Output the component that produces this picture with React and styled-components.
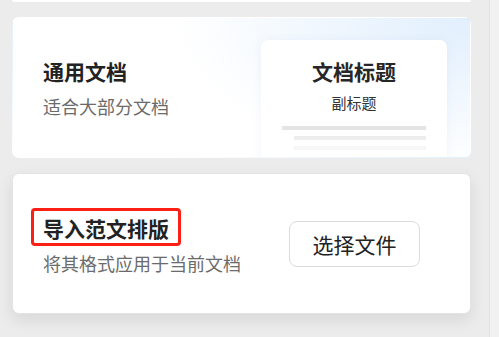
import styled, { createGlobalStyle } from 'styled-components'

const Global = createGlobalStyle`
  html, body {
    margin: 0;
    padding: 0;
    background: #ececec;
    font-family: "Noto Sans CJK SC", "Noto Sans", sans-serif;
    overflow: hidden;
  }
`

const Page = styled.div`
  display: flex;
  width: 499px;
  height: 337px;
`

const List = styled.div`
  flex: 1;
  display: flex;
  flex-direction: column;
  gap: 15px;
  padding: 0 18px 0 12px;
  border-right: 1px solid #e2e2e2;
`

const Track = styled.div`
  width: 9px;
  background: #f1f1f1;
`

const CardStub = styled.div`
  height: 2px;
  background: #fff;
  border-radius: 0 0 6px 6px;
`

const Card = styled.div`
  position: relative;
  height: 141px;
  border-radius: 7px;
  overflow: hidden;
  display: flex;
  align-items: ${p => (p.$top ? 'flex-start' : 'center')};
  justify-content: space-between;
  padding: ${p => p.$pad};
  box-sizing: border-box;
  background: ${p =>
    p.$tint
      ? 'radial-gradient(ellipse 380px 190px at 100% 0%, #e1effd 0%, rgba(255,255,255,0) 78%), #fff'
      : '#fff'};
  box-shadow: ${p => (p.$raised ? '0 6px 16px rgba(0,0,0,0.09)' : 'none')};
  border: 1px solid ${p => (p.$raised ? '#e4e4e4' : 'transparent')};
`

const TextCol = styled.div`
  display: flex;
  flex-direction: column;
  align-self: center;
  padding-bottom: ${p => p.$lift || '0'};
`

const Title = styled.div`
  font-size: 21px;
  font-weight: 700;
  color: #222;
  line-height: 28px;
`

const Marked = styled.span`
  align-self: flex-start;
  margin-left: -12px;
  padding: 3px 9px 1px;
  border: 3px solid #fc1f14;
  border-radius: 4px;
`

const Sub = styled.div`
  font-size: 18px;
  color: #6b6b6b;
  line-height: 24px;
  margin-top: ${p => p.$gap};
`

const Preview = styled.div`
  position: relative;
  width: 186px;
  height: 130px;
  margin-top: 22px;
  background: #fff;
  border-radius: 7px;
  box-shadow: 0 0 10px rgba(160,190,220,0.15);
  display: flex;
  flex-direction: column;
  align-items: center;
  padding-top: 17px;
  box-sizing: border-box;

  &::after {
    content: '';
    position: absolute;
    left: 0;
    right: 0;
    bottom: 0;
    height: 36px;
    background: linear-gradient(rgba(255,255,255,0), #fff);
  }
`

const PreviewTitle = styled.div`
  font-size: 21px;
  font-weight: 700;
  color: #262626;
  line-height: 28px;
`

const PreviewSub = styled.div`
  font-size: 15px;
  color: #333;
  line-height: 20px;
  margin-top: 8px;
`

const Lines = styled.div`
  display: flex;
  flex-direction: column;
  align-items: flex-end;
  gap: 6px;
  width: 144px;
  margin-top: 13px;
`

const Line = styled.div`
  height: 4px;
  width: ${p => p.$w}px;
  background: ${p => p.$c};
`

const Button = styled.button`
  width: 131px;
  height: 46px;
  border: 1px solid #dcdcdc;
  border-radius: 8px;
  background: #fff;
  font-family: inherit;
  font-size: 21px;
  color: #222;
  padding: 0;
`

export default function App() {
  return (
    <Page>
      <Global />
      <List>
        <CardStub />
        <Card $tint $top $pad="0 23px 0 30px">
          <TextCol>
            <Title>通用文档</Title>
            <Sub $gap="9px">适合大部分文档</Sub>
          </TextCol>
          <Preview>
            <PreviewTitle>文档标题</PreviewTitle>
            <PreviewSub>副标题</PreviewSub>
            <Lines>
              <Line $w={144} $c="#e4e4e4" />
              <Line $w={132} $c="#ebebeb" />
              <Line $w={132} $c="#f1f1f1" />
            </Lines>
          </Preview>
        </Card>
        <Card $raised $pad="0 50px 0 30px">
          <TextCol $lift="5px">
            <Marked>
              <Title>导入范文排版</Title>
            </Marked>
            <Sub $gap="5px">将其格式应用于当前文档</Sub>
          </TextCol>
          <Button>选择文件</Button>
        </Card>
      </List>
      <Track />
    </Page>
  )
}
